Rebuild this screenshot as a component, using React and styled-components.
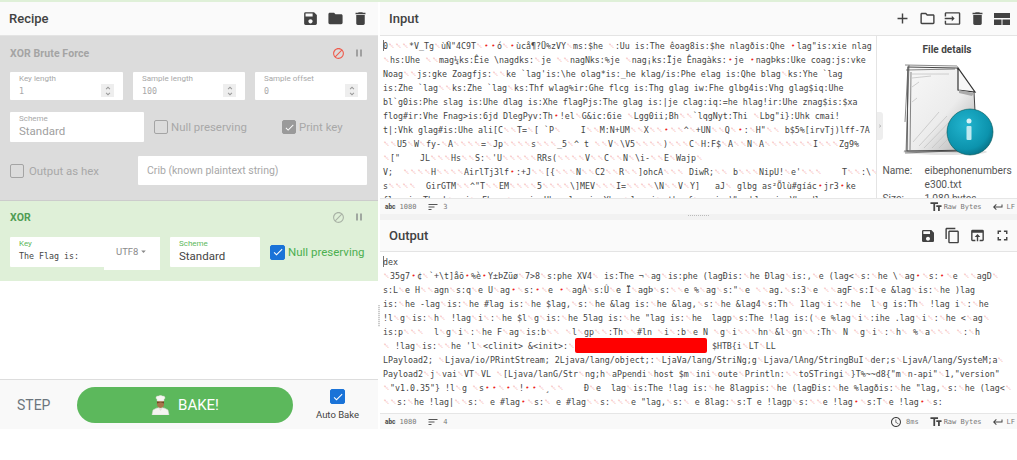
import React from "react";
import styled, { createGlobalStyle } from "styled-components";
import {
  MdSave, MdFolder, MdDelete, MdAdd, MdOutlineFolder, MdInput, MdContentCopy,
  MdOpenInBrowser, MdFullscreen, MdBlock, MdPause, MdTextFields, MdKeyboardReturn, MdAccessTime,
  MdSort, MdCheck, MdUnfoldMore, MdArrowDropDown, MdChevronRight,
} from "react-icons/md";

const Global = createGlobalStyle`
  html, body { margin: 0; padding: 0; background: #fff; }
  body { font-family: Roboto, "Liberation Sans", sans-serif; overflow: hidden; }
  * { box-sizing: border-box; }
`;

const Page = styled.div`
  width: 1017px; height: 460px; display: flex; flex-direction: column; overflow: hidden;
`;
const TopStrip = styled.div` height: 2px; flex: none; background: #dff0d8; `;
const Columns = styled.div`
  display: grid; grid-template-columns: 378px 2px 1fr; height: 427px; flex: none;
`;
const LeftColumn = styled.div` display: flex; flex-direction: column; min-width: 0; `;
const VSplit = styled.div`
  background: #fff; display: flex; align-items: center; position: relative;
  &::after { content: ""; position: absolute; left: 0; top: 303px; width: 2px; height: 22px;
    background: repeating-linear-gradient(#ccc 0 1px, #f2f2f2 1px 2px); }
`;
const RightColumn = styled.div` display: flex; flex-direction: column; min-width: 0; `;

const Header = styled.div`
  height: ${p => p.$h}px; flex: none; display: flex; align-items: center; justify-content: space-between;
  background: #fafafa; border-bottom: 1px solid #e4e4e4; padding: 0 ${p => p.$right}px 0 ${p => p.$left}px;
`;
const HeaderTitle = styled.div` font-size: 13px; font-weight: 500; color: #424242; `;
const IconRow = styled.div` display: flex; align-items: center; gap: ${p => p.$gap}px; color: #424242; `;

const OpCard = styled.div`
  background: ${p => p.$bg}; height: ${p => p.$h}px; flex: none;
  padding: ${p => p.$top}px 10px 0; border-bottom: ${p => p.$line ? "1px solid #ccc" : "none"};
`;
const OpHead = styled.div`
  display: flex; justify-content: space-between; align-items: center; height: 16px;
`;
const OpTitle = styled.div`
  font-size: 10.5px; font-weight: 700; color: ${p => p.$c}; letter-spacing: .1px;
`;
const OpIcons = styled.div` display: flex; align-items: center; gap: 8px; margin-right: 3px; `;
const FieldRow = styled.div`
  display: flex; align-items: ${p => p.$align || "center"}; margin-top: ${p => p.$mt}px; gap: ${p => p.$gap || 0}px;
`;
const Field = styled.div`
  position: relative; flex: none; width: ${p => p.$w}px; height: ${p => p.$h}px; background: #fff;
  padding: 1px 8px 0 ${p => p.$pl || 9}px; border-radius: 1px; margin-left: ${p => p.$ml || 0}px;
`;
const FieldLabel = styled.div` font-size: 8px; line-height: 11px; color: ${p => p.$c}; `;
const MonoValue = styled.div`
  font-family: "DejaVu Sans Mono", "Liberation Mono", monospace; font-size: 8.3px; line-height: 14px;
  color: ${p => p.$c}; white-space: pre;
`;
const SansValue = styled.div` font-size: 11.5px; line-height: 15px; color: ${p => p.$c}; `;
const Spinner = styled.div`
  position: absolute; right: 9px; bottom: 3px; width: 13px; height: 13px; background: #eee;
  display: flex; align-items: center; justify-content: center; color: #999;
`;
const Tick = styled.div`
  width: ${p => p.$s || 14}px; height: ${p => p.$s || 14}px; flex: none; border-radius: 2px;
  display: flex; align-items: center; justify-content: center; color: #fff;
  background: ${p => p.$fill || "transparent"};
  border: ${p => p.$fill ? `1px solid ${p.$fill}` : "1.5px solid #a4a4a4"};
`;
const CheckLabel = styled.div`
  display: flex; align-items: center; gap: ${p => p.$gap || 3}px; flex: none; font-size: ${p => p.$fs || 11.4}px;
  color: ${p => p.$c}; margin-left: ${p => p.$ml || 0}px; width: ${p => p.$w ? p.$w + "px" : "auto"};
`;
const Placeholder = styled.div` font-size: 10.5px; color: #a8a8a8; padding-top: 7px; `;
const UtfBox = styled.div`
  position: absolute; left: 94px; top: 0; width: 56px; height: 33px; background: #fff;
  display: flex; align-items: center; color: #8a8a8a; font-size: 9.5px; padding: 0 0 5px 12px;
`;

const Spacer = styled.div` flex: 1; background: #fff; `;
const Controls = styled.div`
  height: 50px; flex: none; background: #f9f9f9; border-top: 1px solid #ddd;
  display: flex; align-items: center;
`;
const Step = styled.div` font-size: 14px; color: #6c757d; width: 77px; padding-left: 17px; `;
const Bake = styled.div`
  width: 216px; height: 36px; border-radius: 18px; background: #5cb85c; color: #fff; font-size: 15px;
  display: flex; align-items: center; justify-content: center; gap: 8px;
`;
const AutoBake = styled.div`
  width: 45px; margin-left: 22px; display: flex; flex-direction: column; align-items: center; gap: 5px;
  font-size: 9.5px; color: #444; white-space: nowrap;
`;

const Pane = styled.div` height: ${p => p.$h}px; flex: none; display: flex; flex-direction: column; position: relative; `;
const BodyRow = styled.div` flex: 1; min-height: 0; display: flex; background: #fff; `;
const TextArea = styled.div`
  flex: 1; min-width: 0; overflow: hidden; padding: 3px 0 0 3px;
  font-family: "DejaVu Sans Mono", "Liberation Mono", monospace; font-size: 8.3px; line-height: 14px;
  color: #444;
`;
const Line = styled.div` white-space: pre; height: 14px; `;
const Ctl = styled.span`
  display: inline-block; width: 7px; overflow: hidden; text-align: center; vertical-align: top;
  color: #f07272; font-size: 6.5px;
`;
const Dot = styled.span`
  display: inline-block; width: 7px; overflow: hidden; vertical-align: top; color: #e22; text-align: center; font-size: 7px;
`;
const Caret = styled.span` display: inline-block; width: 1px; height: 11px; background: #777; vertical-align: -2px; margin-right: -1px; `;
const Redact = styled.span`
  display: inline-block; width: 132px; height: 15px; margin: -1px 0; border-radius: 2px; background: #f00; vertical-align: top;
`;

const Details = styled.div`
  width: 141px; flex: none; border-left: 1px solid #e4e4e4; position: relative; overflow: hidden;
  padding-top: 7px; display: flex; flex-direction: column; align-items: center;
`;
const DetailsTitle = styled.div` font-size: 10px; font-weight: 700; color: #444; line-height: 14px; margin-bottom: 5px; `;
const DetailGrid = styled.div`
  display: grid; grid-template-columns: 42px 1fr; width: 134px; margin-top: 6px; margin-left: 5px; flex: none;
  font-size: 10.2px; line-height: 14px; color: #555;
`;
const Collapse = styled.div`
  position: absolute; left: 0; top: 76px; width: 6px; height: 28px; background: #eee; border-radius: 0 3px 3px 0;
  display: flex; align-items: center; justify-content: center; color: #888; overflow: hidden;
`;

const Status = styled.div`
  height: 16px; flex: none; background: #f9f9f9; border-top: 1px solid #e6e6e6; display: flex; align-items: center;
  justify-content: space-between; padding: 0 2px 0 5px;
  font-family: "DejaVu Sans Mono", "Liberation Mono", monospace; font-size: 7px; color: #777;
`;
const StatGroup = styled.div` display: flex; align-items: center; gap: ${p => p.$gap}px; `;
const Stat = styled.div` display: flex; align-items: center; gap: ${p => p.$gap || 4}px; color: #777; `;
const Abc = styled.span` font-family: Roboto, sans-serif; font-weight: 900; font-size: 6.5px; color: #555; `;
const HSplit = styled.div`
  height: 6px; flex: none; background: #f2f2f2; position: relative;
  &::after { content: ""; position: absolute; left: 308px; top: 1px; height: 1px; width: 22px;
    background: repeating-linear-gradient(90deg, #bbb 0 1px, #f2f2f2 1px 2px); }
`;

const inputLines = [
  "0§§§*V_Tg§ùÑ\"4C9T§¤¤ó§¤ùcå¶?Ü%zVY§ms:$he §:Uu is:The êoag8is:$he nlagðis:Qhe ¤lag\"is:xie nlag",
  "§hs:Uhe §§mag¼ks:Êie \\nagdks:§je §§nagNks:%je §nag¡ks:Ïje Ênagàks:¤je ¤nagÞks:Uke coag:js:vke",
  "Noag§§js:gke Zoagfjs:§§ke `lag'is:\\he olag*is:_he klag/is:Phe elag is:Qhe blag§ks:Yhe `lag",
  "is:Zhe `lag§§ks:Zhe `lag§ks:Thf wlag%ir:Ghe flcg is:Thg glag iw:Fhe glbg4is:Vhg glag$iq:Uhe",
  "bl`g0is:Phe slag is:Uhe dlag is:Xhe flagPjs:The glag is:|je clag:iq:=he hlag!ir:Uhe znag$is:$xa",
  "flog#ir:Vhe Fnag>is:6jd DlegPyv:Th¤!el§G&ic:6ie §Lgg0ii;Bh§§`lqgNyt:Thi §Lbg\"i}:Uhk cmai!",
  "t|:Vhk glag#is:Uhe ali[C§§T=§[ `P§    I§§M:N+UM§§X§§¤§§^§+UN§§Q§¤:§H\"§§ b$5%[irvTj)lff-7A",
  "§§U5§W§fy-§A§§§§=§Jp§§§§s§§§_5§^ t §§V§\\V5§§§§)§§§C§H:F$§A§§N§A§§§§§§§I§§§Zg9%",
  "§[\"    JL§§§Hs§§S:§'U§§§§§RRs(§§§§V§§C§§N§\\i-§§E§Wajp§",
  "V;  §§§§H§§§§AirlTj3lf¤:+J§§[{§§§N§§C2§§R§§]ohcA§§§ DiwR;§§ b§§§NipU!§e'§§§    T§§:\\§",
  "s§§§§  GirGTM§§^\"T§§EM§§§§5§§§§\\]MEV§§§I=§§§§\\N§§V§Y]   aJ§ glbg as²Õlù#gíác¤jr3¤ke",
  "flog is:The k§g i§:Fhe g§ag is:Uhe nlag is:Yhe §lag i§:the f§ag is:Whe hlag is:Vhe dlag",
];

const outputLines = [
  "§35g7¤¢§`+\\t]åõ¤%è¤Y±ÞZüø§7>8§s:phe XV4§ is:The ¬§ag§is:phe (lagÐis:§he Ðlag§is:,§e (lag<§s:§he \\§ag¤§s:¤§e §§agD§",
  "s:L§e H§§agn§s:q§e U§ag¤§s:¤§e ¤§agÀ§s:Û§e Ï§agÞ§s:§§e %§ag§s:\"§e §§ag.§s:3§e §§agF§s:I§e &lag§is:§he )lag",
  "is:§he -lag§is:§he #lag is:§he $lag,§s:§he &lag is:§he &lag,§s:§he &lag4§s:Th§ 1lag§i§:§he  l§g is:Th§ !lag i§:§he",
  "!l§g§is:§h§ !lag§i§:§he $l§g§is:§he 5lag is:§he \"lag is:§he  lagp§s:The !lag is:(§e %lag§i§:ihe .lag§i§:§he <§ag§",
  "is:p§§§  l§g§i§:§he F§ag§is:b§§ §l§gp§§:Th§§#ln §i§:b§e N §g§i§§§hn§&l§gn§§:Th§ N §g§i§:§h§ %§a§§§ §:§h",
  null,
  "LPayload2; §Ljava/io/PRintStream; 2Ljava/lang/object;:§LjaVa/lang/StriNg;g§Ljava/lAng/StringBuI§der;s§LjavA/lang/SysteM;a§",
  "Payload2§j§vai§VT§VL §[Ljava/lanG/Str§ng;h§aPpendi§host $m§ini§oute§Println:§§toSTringi§}T%~~d8{\"m§n-api\"§1,\"version\"",
  "§\"v1.0.35\"} !l§g §s¤¤§¤§!¤¤§¸§§    Ð§e  lag§is:The !lag is:§he 8lagpis:§he (lagÐis:§he %lagðis:§he \"lag,§s:§he (lag<§",
  "§§s:§he !lag|§§s:§ e #lag¤§s:§ e #lag§§s:§§§e \"lag,§s:§ e 8lag:§s:T e !lagp§s:§§e !lag¤§s:T§e !lag¤§s:",
];

const Rich = ({ text }) => (
  <>
    {text.split(/([§¤])/).map((part, i) => {
      if (part === "§") return <Ctl key={i}>␀</Ctl>;
      if (part === "¤") return <Dot key={i}>•</Dot>;
      return part;
    })}
  </>
);

const Bytes = ({ lines }) => <Line><Rich text={lines} /></Line>;

const Check = ({ fill, size = 14 }) => (
  <Tick $s={size} $fill={fill}>{fill ? <MdCheck size={size - 3} /> : null}</Tick>
);

const Num = ({ w, label, value }) => (
  <Field $w={w} $h={28}>
    <FieldLabel $c="#a8a8a8">{label}</FieldLabel>
    <MonoValue $c="#a8a8a8">{value}</MonoValue>
    <Spinner><MdUnfoldMore size={12} /></Spinner>
  </Field>
);

const LayoutIcon = () => (
  <svg width="16" height="12" viewBox="0 0 16 12">
    <path fill="currentColor" d="M0 0h16v5H0z M0 6.5h7.5V12H0z M8.5 6.5H16V12H8.5z" />
  </svg>
);

const Chef = () => (
  <svg width="19" height="20" viewBox="0 0 19 20">
    <path d="M1 20 L2 15 Q5 12.5 9.5 12.5 Q14 12.5 17 15 L18 20 Z" fill="#f4f4f0" stroke="#d9d9d0" strokeWidth=".5" />
    <path d="M7 12.5 L9.5 16 L12 12.5 Z" fill="#e0e0d8" />
    <ellipse cx="9.5" cy="8.5" rx="3.6" ry="4.4" fill="#a8744a" />
    <path d="M6 6.5 Q9.5 8 13 6.5 L13 8.5 Q9.5 6.5 6 8.5 Z" fill="#6e4526" />
    <path d="M5 2.5 Q5 .6 7.5 1 Q9.5 -.4 11.5 1 Q14 .6 14 2.5 Q14 4 13 4.5 L13 6 L6 6 L6 4.5 Q5 4 5 2.5 Z" fill="#f6f6f2" stroke="#d0d0c8" strokeWidth=".4" />
  </svg>
);

const FileIcon = () => (
  <svg width="96" height="96" viewBox="0 0 96 96" style={{ flex: "none" }}>
    <defs>
      <linearGradient id="pg" x1="0" y1="0" x2="1" y2="1">
        <stop offset="0" stopColor="#f8f8f8" />
        <stop offset=".55" stopColor="#ececec" />
        <stop offset="1" stopColor="#a8a8a8" />
      </linearGradient>
      <radialGradient id="ball" cx=".4" cy=".35" r=".75">
        <stop offset="0" stopColor="#22b5cf" />
        <stop offset=".7" stopColor="#0c93ad" />
        <stop offset="1" stopColor="#06667a" />
      </radialGradient>
    </defs>
    <ellipse cx="46" cy="90" rx="42" ry="3" fill="#e2e2e2" />
    <path d="M9 5 L58 6 L75 30 L78 88 L8 89 Z" fill="url(#pg)" stroke="#444" strokeWidth="1" />
    <path d="M6 3 L58 4 M7 8 L56 7 M10 3 L7 90 M12 10 L11 88 M5 89 L80 90 M6 91 L76 88 M9 4 L6 60" stroke="#555" strokeWidth=".7" fill="none" />
    <path d="M13 12 L50 12 M13 16 L32 14 M13 25 L20 20 M13 40 L18 36 M14 80 L40 50 M20 84 L48 54 M25 86 L60 50 M33 86 L58 60 M40 86 L60 66" stroke="#c4c4c4" strokeWidth=".8" fill="none" />
    <path d="M59 6 L59 28 L76 30 Z" fill="#f7f7f7" stroke="#333" strokeWidth="1.2" />
    <path d="M60 28 L75 31 L73 34 L60 31 Z" fill="#aaa" />
    <circle cx="71" cy="70" r="23" fill="url(#ball)" stroke="#055" strokeWidth=".6" />
    <circle cx="70" cy="59" r="2.5" fill="#d8f2f6" />
    <rect x="67.5" y="64" width="5" height="14" rx="1" fill="#bfe9f0" />
  </svg>
);

const Head = ({ title, children, gap, right, h = 34 }) => (
  <Header $h={h} $left={9} $right={right}>
    <HeaderTitle>{title}</HeaderTitle>
    <IconRow $gap={gap}>{children}</IconRow>
  </Header>
);

export default function App() {
  return (
    <Page>
      <Global />
      <TopStrip />
      <Columns>
        <LeftColumn>
          <Header $h={34} $left={9} $right={9}>
            <HeaderTitle>Recipe</HeaderTitle>
            <IconRow $gap={8}>
              <MdSave size={17} /><MdFolder size={17} /><MdDelete size={17} />
            </IconRow>
          </Header>

          <OpCard $bg="#dcdcdc" $h={165} $top={9} $line>
            <OpHead>
              <OpTitle $c="#a4a4a4">XOR Brute Force</OpTitle>
              <OpIcons>
                <MdBlock size={13} color="#ee5b4d" /><MdPause size={12} color="#a0a0a0" />
              </OpIcons>
            </OpHead>
            <FieldRow $mt={11} $gap={10}>
              <Num w={113} label="Key length" value="1" />
              <Num w={112} label="Sample length" value="100" />
              <Num w={112} label="Sample offset" value="0" />
            </FieldRow>
            <FieldRow $mt={12}>
              <Field $w={134} $h={30}>
                <FieldLabel $c="#a8a8a8">Scheme</FieldLabel>
                <SansValue $c="#a0a0a0">Standard</SansValue>
              </Field>
              <CheckLabel $c="#a8a8a8" $ml={10} $w={128}><Check />Null preserving</CheckLabel>
              <CheckLabel $c="#a8a8a8"><Check fill="#9a9a9a" />Print key</CheckLabel>
            </FieldRow>
            <FieldRow $mt={14}>
              <CheckLabel $c="#a8a8a8" $gap={5} $w={128}><Check />Output as hex</CheckLabel>
              <Field $w={229} $h={29}><Placeholder>Crib (known plaintext string)</Placeholder></Field>
            </FieldRow>
          </OpCard>

          <OpCard $bg="#dff0d8" $h={80} $top={8}>
            <OpHead>
              <OpTitle $c="#4f9c54">XOR</OpTitle>
              <OpIcons>
                <MdBlock size={13} color="#a9b3a6" /><MdPause size={12} color="#a0a8a0" />
              </OpIcons>
            </OpHead>
            <FieldRow $mt={12}>
              <Field $w={150} $h={30}>
                <FieldLabel $c="#5cb85c">Key</FieldLabel>
                <MonoValue $c="#444">The Flag is:</MonoValue>
                <UtfBox>UTF8<MdArrowDropDown size={11} /></UtfBox>
              </Field>
              <Field $w={90} $h={30} $ml={10}>
                <FieldLabel $c="#5cb85c">Scheme</FieldLabel>
                <SansValue $c="#444">Standard</SansValue>
              </Field>
              <CheckLabel $c="#4caf50" $ml={10} $gap={3} $fs={11.5}><Check fill="#1a73d8" size={15} />Null preserving</CheckLabel>
            </FieldRow>
          </OpCard>

          <Spacer />

          <Controls>
            <Step>STEP</Step>
            <Bake><Chef />BAKE!</Bake>
            <AutoBake><Check fill="#1a73d8" size={15} />Auto Bake</AutoBake>
          </Controls>
        </LeftColumn>

        <VSplit />

        <RightColumn>
          <Pane $h={212}>
            <Head title="Input" gap={8} right={7}>
              <MdAdd size={17} /><MdOutlineFolder size={17} /><MdInput size={17} /><MdDelete size={17} /><LayoutIcon />
            </Head>
            <BodyRow>
              <TextArea>
                {inputLines.map((l, i) => (
                  <Line key={i}>{i === 0 ? <Caret /> : null}<Rich text={l} /></Line>
                ))}
              </TextArea>
              <Details>
                <DetailsTitle>File details</DetailsTitle>
                <FileIcon />
                <DetailGrid>
                  <span>Name:</span><span>eibephonenumbers<br />e300.txt</span>
                  <span>Size:</span><span>1,080 bytes</span>
                </DetailGrid>
                <Collapse><MdChevronRight size={10} /></Collapse>
              </Details>
            </BodyRow>
            <Status>
              <StatGroup $gap={11}>
                <Stat><Abc>abc</Abc>1080</Stat>
                <Stat><MdSort size={12} color="#555" />3</Stat>
              </StatGroup>
              <StatGroup $gap={10}>
                <Stat $gap={1}><MdTextFields size={14} color="#444" />Raw Bytes</Stat>
                <Stat $gap={3}><MdKeyboardReturn size={12} color="#444" />LF</Stat>
              </StatGroup>
            </Status>
          </Pane>
          <HSplit />
          <Pane $h={209}>
            <Head title="Output" gap={8} right={6} h={32}>
              <MdSave size={16} /><MdContentCopy size={17} /><MdOpenInBrowser size={17} /><MdFullscreen size={17} />
            </Head>
            <BodyRow>
              <TextArea>
                <Line><Caret />dex</Line>
                {outputLines.map((l, i) =>
                  l === null ? (
                    <Line key={i}>
                      <Rich text="§ !lag§is:§§he 'l§<clinit> &<init>:§" /><Redact />
                      <Rich text=" $HTB{i§LT§LL" />
                    </Line>
                  ) : (
                    <Bytes key={i} lines={l} />
                  )
                )}
              </TextArea>
            </BodyRow>
            <Status>
              <StatGroup $gap={11}>
                <Stat><Abc>abc</Abc>1080</Stat>
                <Stat><MdSort size={12} color="#555" />4</Stat>
              </StatGroup>
              <StatGroup $gap={10}>
                <Stat $gap={4}><MdAccessTime size={12} color="#444" />8ms</Stat>
                <Stat $gap={1}><MdTextFields size={14} color="#444" />Raw Bytes</Stat>
                <Stat $gap={3}><MdKeyboardReturn size={12} color="#444" />LF</Stat>
              </StatGroup>
            </Status>
          </Pane>
        </RightColumn>
      </Columns>
    </Page>
  );
}
